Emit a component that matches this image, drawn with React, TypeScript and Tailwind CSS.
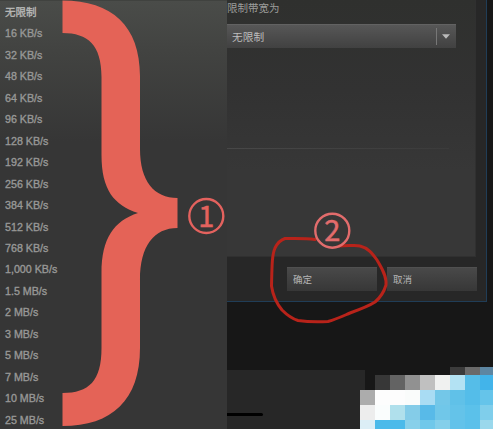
import React from 'react';

const rates = [
  '无限制',
  '16 KB/s',
  '32 KB/s',
  '48 KB/s',
  '64 KB/s',
  '96 KB/s',
  '128 KB/s',
  '192 KB/s',
  '256 KB/s',
  '384 KB/s',
  '512 KB/s',
  '768 KB/s',
  '1,000 KB/s',
  '1.5 MB/s',
  '2 MB/s',
  '3 MB/s',
  '5 MB/s',
  '7 MB/s',
  '10 MB/s',
  '25 MB/s',
];

// null cells stay transparent
const mosaic: (string | null)[][] = [
  [null, null, null, null, null, null, '#3b3b3b', '#6a6a6a', '#5d86a2'],
  [null, '#373737', '#636363', '#919191', '#c0c0c0', '#f0f1f0', '#b3e2f3', '#55bde8', '#42b4ea'],
  ['#acacac', '#fdfdfd', '#fdfdfd', '#fafcfb', '#a9dcf3', '#73c7e8', '#60c1e8', '#54bde9', '#65c4ea'],
  ['#ededed', '#fafdfd', '#b0e0ec', '#84cce8', '#58bae8', '#70c7e9', '#64c3e9', '#5bc1ea', '#7fceeb'],
  ['#dceef6', '#4bbaea', '#4bbaea', '#88d0ea', '#70c8ea', '#84cfea', '#62c2ea', '#5bc0ea', '#9ad8ec'],
];

const RateList = () => (
  <div className="w-[227px] h-full shrink-0 border-t border-[#40423f] bg-[#363636] bg-[linear-gradient(to_bottom,#4a4c49_0px,#424341_50px,#363636_140px)]">
    <ul className="flex flex-col pt-[1px] pl-[5px]">
      {rates.map(rate => (
        <li key={rate} className="h-[21.46px] text-[10.7px] leading-[21.46px] [-webkit-text-stroke:0.35px] text-[#989897] first:text-[10.5px] first:text-[#b8b9b7]">
          {rate}
        </li>
      ))}
    </ul>
  </div>
);

const Dialog = () => (
  <div className="w-[260px] h-[302px] bg-[#272727] border-r border-b border-[#203d57]">
    <div className="w-[249px] h-[257px] border-r border-b border-[#303030] bg-[linear-gradient(to_bottom,#2f302e_0px,#323232_90px,#373737_170px)]">
      <div className="h-[24px] text-[10.5px] leading-[16px] text-[#9c9d9b]">限制带宽为</div>
      <div className="flex items-center w-[229px] h-[24px] border-t border-[#626262] bg-linear-to-b from-[#575757] to-[#414141] text-[10.7px] text-[#bdbdbd]">
        <span className="flex-1 pl-[5px] pt-[2px]">无限制</span>
        <span className="w-px h-[17px] bg-[#777777]" />
        <span className="w-[17px] flex justify-center">
          <svg width="8" height="5" viewBox="0 0 8 5" fill="#bababa"><path d="M0 0.3h8L4 4.7z" /></svg>
        </span>
        <span className="w-[2px]" />
      </div>
      <div className="mt-[100px] w-[222px] h-px bg-linear-to-r from-[#484848] to-[#3b3b3b]" />
    </div>
    <div className="flex gap-[10px] pl-[60px] pt-[10px] text-[9.5px] text-[#b5b5b5]">
      <button className="w-[90px] h-[24px] pl-[6px] pt-[2px] text-left border-t border-[#505050] bg-linear-to-b from-[#494949] to-[#373737]">确定</button>
      <button className="w-[90px] h-[24px] pl-[6px] pt-[2px] text-left border-t border-[#505050] bg-linear-to-b from-[#494949] to-[#373737]">取消</button>
    </div>
  </div>
);

const Marks = () => (
  <svg className="absolute inset-0" width="493" height="429" viewBox="0 0 493 429">
    <path
      fill="#e46357"
      d="M62.5 0.5C112 0.5 140 26 140 76V149C140 181 154 198 177.5 198V228C154 228 140 246 140 280V348C140 400 112 426 62.5 426V393C89 393 101.5 381 101.5 348V273C101.5 238 114 221 138 213C114 205 101.5 190 101.5 155V77C101.5 45 88 33 62.5 33Z"
    />
    <path
      fill="none"
      stroke="#b8231a"
      strokeWidth="3"
      strokeLinejoin="round"
      strokeLinecap="round"
      d="M315 239.5C305 238 295 238.5 285 238.5C280 240 277 244 275 248C272 255 272 265 271.5 286C273 296 277 304 282 310C288 316 293 319 298 320.5C308 322 320 322 328 321.5C337 319 343 316 350 313C361 309 369 306 375 302C381 297 384 292 386 285C387 276 381 267 377 260C372 253 368 248 360 246C355 244.5 350 246 339 246"
    />
    <g fill="none" strokeWidth="2.4">
      <circle cx="206.3" cy="216" r="17" stroke="#e4625e" />
      <circle cx="332.3" cy="230.7" r="17" stroke="#e26c6c" />
    </g>
    <g fontFamily="'Noto Sans CJK SC', sans-serif" fontSize="29" strokeWidth="0.5" textAnchor="middle">
      <text x="206.3" y="226.5" fill="#e4625e" stroke="#e4625e">1</text>
      <text x="332.3" y="241" fill="#e26c6c" stroke="#e26c6c">2</text>
    </g>
  </svg>
);

const App = () => {
  return (
    <div className="relative flex w-[493px] h-[429px] overflow-hidden bg-[#171717] font-['Liberation_Sans','Noto_Sans_CJK_SC',sans-serif]">
      <RateList />
      <div className="flex flex-col w-[266px] h-full">
        <Dialog />
        <div className="mt-[68px] flex-1 w-[138px] bg-[#272727] pt-[43px]">
          <div className="w-[36px] h-[3px] rounded-r-full bg-black" />
        </div>
      </div>
      <div className="absolute left-[360px] top-[367px]">
        {mosaic.map((row, i) => (
          <div key={i} className="flex h-[15px] first:h-[8px]">
            {row.map((color, j) => (
              <span key={j} className="w-[15px] h-full" style={{ backgroundColor: color ?? 'transparent' }} />
            ))}
          </div>
        ))}
      </div>
      <Marks />
    </div>
  );
};

export default App;
